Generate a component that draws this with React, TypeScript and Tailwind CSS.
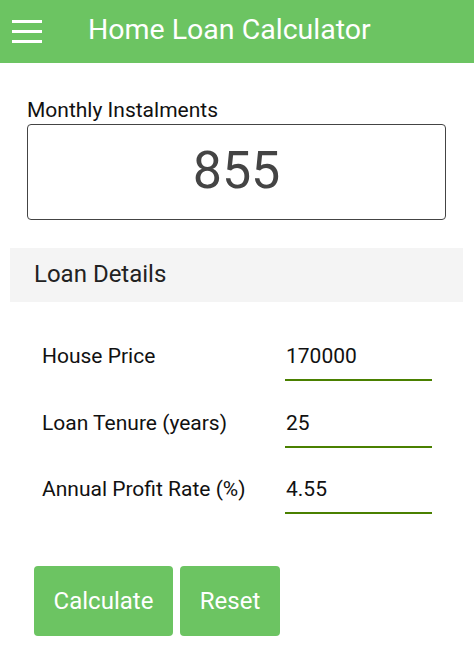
import React, { useState } from 'react';

const rows = [
  { label: 'House Price', value: '170000' },
  { label: 'Loan Tenure (years)', value: '25' },
  { label: 'Annual Profit Rate (%)', value: '4.55' },
];

export default function App() {
  const [values, setValues] = useState(rows.map((r) => r.value));

  return (
    <div className="w-[474px] h-[647px] bg-white overflow-hidden font-['Roboto',sans-serif]">
      <header className="h-[63px] bg-[#6cc462] flex items-center">
        <div className="w-[30px] ml-[12px] flex flex-col gap-[7px]">
          <span className="h-[3px] bg-white" />
          <span className="h-[3px] bg-white" />
          <span className="h-[3px] bg-white" />
        </div>
        <h1 className="ml-[46px] text-[28.5px] text-white leading-none pb-[3px]">Home Loan Calculator</h1>
      </header>

      <div className="px-[27px] pt-[35px]">
        <div className="text-[21px] text-[#111] leading-[24px]">Monthly Instalments</div>
        <div className="mt-[2px] w-[419px] h-[96px] border border-[#444] rounded-[4px] flex items-center justify-center">
          <span className="text-[52px] text-[#444] leading-none pb-[2px]">855</span>
        </div>
      </div>

      <div className="ml-[10px] mr-[11px] mt-[28px] h-[54px] bg-[#f4f4f4] flex items-center px-[24px]">
        <span className="text-[24px] text-[#222] pb-[2px]">Loan Details</span>
      </div>

      <div className="mt-[32px] flex flex-col gap-[19.5px]">
        {rows.map((row, i) => (
          <div key={row.label} className="flex items-end h-[47px]">
            <span className="w-[285px] pl-[42px] text-[21px] leading-[30px] text-[#111] pb-[10px]">{row.label}</span>
            <input
              value={values[i]}
              onChange={(e) => setValues(values.map((v, j) => (j === i ? e.target.value : v)))}
              className="w-[147px] h-[47px] border-b-2 border-[#4a8000] bg-transparent text-[21px] text-[#111] pl-[1px] pb-[1px] outline-none"
            />
          </div>
        ))}
      </div>

      <div className="mt-[52px] ml-[34px] flex gap-[7px]">
        <button className="w-[139px] h-[70px] bg-[#6cc462] rounded-[4px] text-white text-[24px]">Calculate</button>
        <button className="w-[100px] h-[70px] bg-[#6cc462] rounded-[4px] text-white text-[24px]">Reset</button>
      </div>
    </div>
  );
}
